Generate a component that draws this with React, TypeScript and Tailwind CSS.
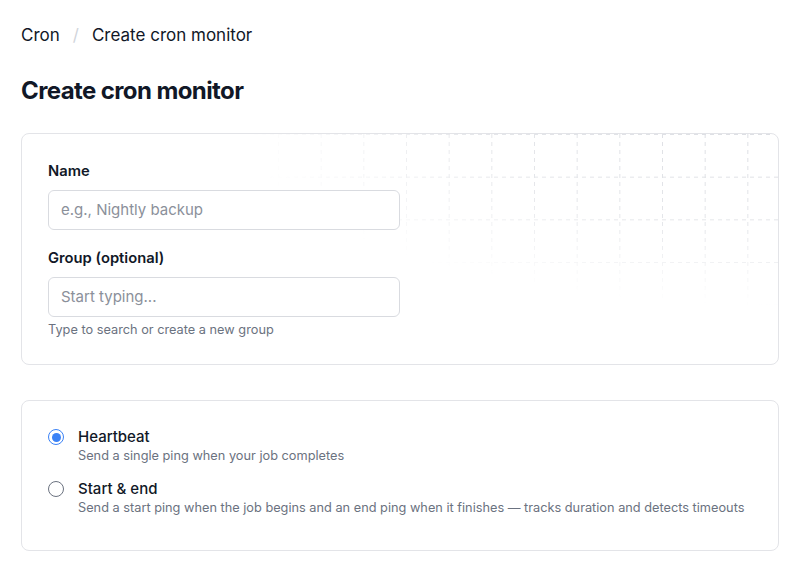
import React from "react";

function GridDecor() {
  const size = 128 / 3;
  const v: number[] = [];
  for (let i = 0; i < 19; i++) v.push(i * size);
  const h: number[] = [];
  for (let i = 0; i < 6; i++) h.push(i * size);
  return (
    <svg
      className="pointer-events-none absolute inset-0 h-full w-full"
      aria-hidden="true"
    >
      <defs>
        <radialGradient id="fade" cx="100%" cy="0%" r="100%" gradientUnits="objectBoundingBox" gradientTransform="translate(1 0) scale(0.7 0.75) translate(-1 0)">
          <stop offset="0%" stopColor="white" stopOpacity="1" />
          <stop offset="55%" stopColor="white" stopOpacity="0.75" />
          <stop offset="100%" stopColor="white" stopOpacity="0" />
        </radialGradient>
        <mask id="gridmask">
          <rect x="0" y="0" width="100%" height="100%" fill="url(#fade)" />
        </mask>
      </defs>
      <g mask="url(#gridmask)" stroke="#dcdee3" strokeWidth="1" strokeDasharray="4 4">
        {v.map((x, i) => (
          <line key={"v" + i} x1={x + 0.5} y1={0} x2={x + 0.5} y2={400} />
        ))}
        {h.map((y, i) => (
          <line key={"h" + i} x1={0} y1={y + 0.5} x2={800} y2={y + 0.5} />
        ))}
      </g>
    </svg>
  );
}

export default function App() {
  return (
    <div
      className="min-h-[571px] bg-white px-[21px] pt-[24px] text-[#111827]"
      style={{ fontFamily: "Inter, 'Noto Sans', sans-serif" }}
    >
      <nav className="flex items-center text-[17px] leading-[22px] text-[#111827]">
        <span>Cron</span>
        <span className="mx-[13px] text-[#d1d5db]">/</span>
        <span>Create cron monitor</span>
      </nav>
      <h1 className="mt-[29px] text-[24px] font-bold leading-[32px] tracking-[-0.025em] text-[#111827]">
        Create cron monitor
      </h1>

      <div className="relative mt-[26px] overflow-hidden rounded-[8px] border border-[#e3e4e8] bg-white px-[26px] pb-[26px] pt-[26px]">
        <GridDecor />
        <div className="relative w-[352px]">
          <label className="block text-[14.75px] font-semibold leading-[22px] text-[#111827]">
            Name
          </label>
          <div className="mt-[8px] flex h-[40px] items-center rounded-[6px] border border-[#d9dbe0] bg-white px-[12px] text-[15px] text-[#8b909a]">
            e.g., Nightly backup
          </div>
          <label className="mt-[17px] block text-[14.75px] font-semibold leading-[22px] text-[#111827]">
            Group (optional)
          </label>
          <div className="mt-[8px] flex h-[40px] items-center rounded-[6px] border border-[#d9dbe0] bg-white px-[12px] text-[15px] text-[#8b909a]">
            Start typing...
          </div>
          <p className="mt-[4px] text-[12.75px] leading-[17px] text-[#6b7280]">
            Type to search or create a new group
          </p>
        </div>
      </div>

      <div className="mt-[35px] rounded-[8px] border border-[#e3e4e8] bg-white px-[26px] pb-[34px] pt-[26px]">
        <div className="flex items-start gap-[14px]">
          <span className="mt-[2px] flex h-[16px] w-[16px] shrink-0 items-center justify-center rounded-full border-[1.5px] border-[#3b82f6]">
            <span className="h-[9px] w-[9px] rounded-full bg-[#3b82f6]" />
          </span>
          <div>
            <div className="text-[15px] font-medium leading-[20px] text-[#111827]">Heartbeat</div>
            <div className="text-[12.75px] leading-[17px] text-[#6b7280]">
              Send a single ping when your job completes
            </div>
          </div>
        </div>
        <div className="mt-[15px] flex items-start gap-[14px]">
          <span className="mt-[2px] h-[16px] w-[16px] shrink-0 rounded-full border border-[#6b7280]" />
          <div>
            <div className="text-[15px] font-medium leading-[20px] text-[#111827]">Start &amp; end</div>
            <div className="text-[12.75px] leading-[17px] text-[#6b7280]">
              Send a start ping when the job begins and an end ping when it finishes — tracks duration and detects timeouts
            </div>
          </div>
        </div>
      </div>
    </div>
  );
}
